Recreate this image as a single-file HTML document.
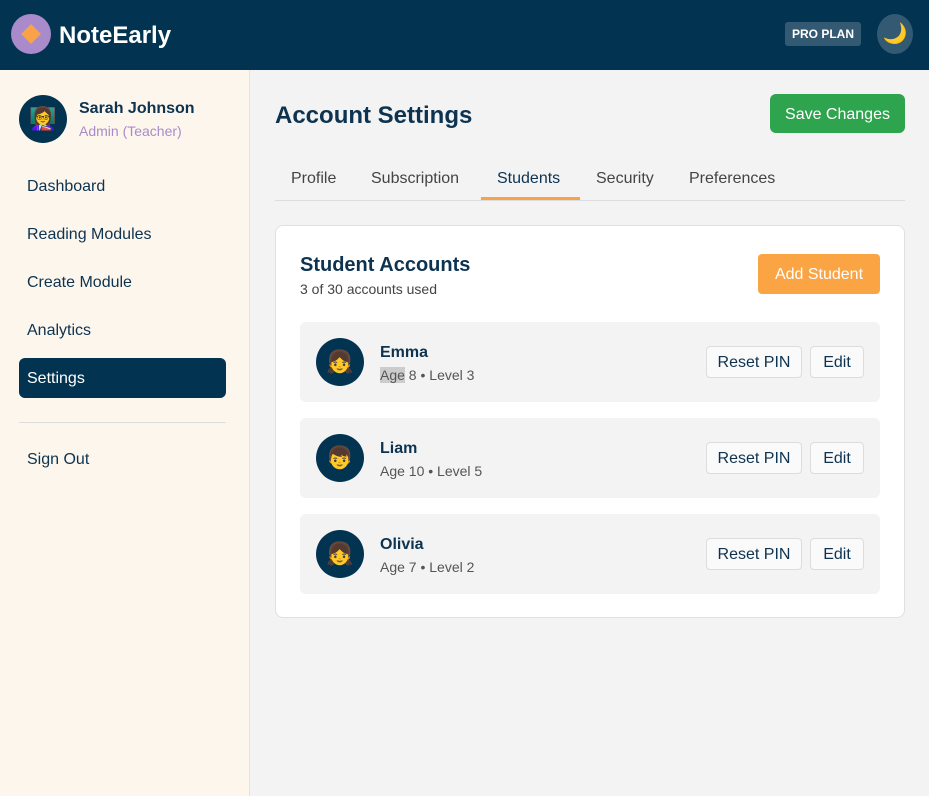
<!DOCTYPE html><html><head><style>
*{box-sizing:border-box;margin:0;padding:0}
body{width:929px;height:796px;overflow:hidden;font-family:"Liberation Sans",sans-serif;background:#f3f3f3;position:relative;color:#0d3350}
.hdr{position:absolute;left:0;top:0;width:929px;height:70px;background:#023452}
.logo{position:absolute;left:11px;top:14px;width:40px;height:40px;border-radius:50%;background:#a98bcb}
.logo i{position:absolute;left:13px;top:13px;width:14px;height:14px;background:#f9a24a;transform:rotate(45deg)}
.brand{position:absolute;left:59px;top:22px;color:#fff;font-weight:bold;font-size:24px}
.pro{position:absolute;left:785px;top:22px;width:76px;height:24px;background:#345a73;border-radius:3px;color:#fff;font-size:12px;font-weight:bold;text-align:center;line-height:24px}
.moon{position:absolute;left:877px;top:14px;width:36px;height:40px;border-radius:50%;background:#345a73;text-align:center;line-height:40px;font-size:20px}
.side{position:absolute;left:0;top:70px;width:250px;height:726px;background:#fdf6ec;border-right:1px solid #e3e3e3}
.av{position:absolute;left:19px;top:95px;width:48px;height:48px;border-radius:50%;background:#023452;text-align:center;line-height:48px;font-size:22px}
.nm{position:absolute;left:79px;top:100px;font-weight:bold;font-size:16px}
.rl{position:absolute;left:79px;top:123px;font-size:14px;color:#a98bcb}
.nav{position:absolute;left:19px;width:207px;height:40px;line-height:42px;padding-left:8px;font-size:16px;border-radius:6px}
.act{background:#023452;color:#fff}
.div{position:absolute;left:19px;top:422px;width:207px;height:1px;background:#ddd}
h1{position:absolute;left:275px;top:102px;font-size:24px}
.save{position:absolute;left:770px;top:94px;width:135px;height:39px;background:#2ea44f;color:#fff;border-radius:6px;font-size:16px;text-align:center;line-height:41px}
.tabs{position:absolute;left:275px;top:160px;width:630px;height:41px;border-bottom:1px solid #ddd}
.tab{position:absolute;top:10px;font-size:16px;color:#444}
.ul{position:absolute;left:206px;top:37px;width:99px;height:3px;background:#f9a24a}
.card{position:absolute;left:275px;top:225px;width:630px;height:393px;background:#fff;border:1px solid #e0e0e0;border-radius:8px}
.ct{position:absolute;left:300px;top:254px;font-size:20px;font-weight:bold}
.cs{position:absolute;left:300px;top:281px;font-size:14px;color:#444}
.add{position:absolute;left:758px;top:254px;width:122px;height:40px;background:#fba444;color:#fff;border-radius:4px;text-align:center;line-height:41px;font-size:16px}
.row{position:absolute;left:300px;width:580px;height:80px;background:#f3f3f3;border-radius:6px}
.ra{position:absolute;left:16px;top:16px;width:48px;height:48px;border-radius:50%;background:#023452;text-align:center;line-height:48px;font-size:22px}
.rn{position:absolute;left:80px;top:22px;font-weight:bold;font-size:16px}
.rs{position:absolute;left:80px;top:45px;font-size:14px;color:#555}
.b{position:absolute;top:24px;height:32px;background:#fafafa;border:1px solid #ddd;border-radius:4px;text-align:center;line-height:31px;font-size:16px}
.hl{background:#ccc}
</style></head><body>
<div class="hdr"><div class="logo"><i></i></div><div class="brand">NoteEarly</div><div class="pro">PRO PLAN</div><div class="moon">🌙</div></div>
<div class="side"></div>
<div class="av">👩‍🏫</div><div class="nm">Sarah Johnson</div><div class="rl">Admin (Teacher)</div>
<div class="nav" style="top:166px">Dashboard</div>
<div class="nav" style="top:214px">Reading Modules</div>
<div class="nav" style="top:262px">Create Module</div>
<div class="nav" style="top:310px">Analytics</div>
<div class="nav act" style="top:358px">Settings</div>
<div class="div"></div>
<div class="nav" style="top:439px">Sign Out</div>
<h1>Account Settings</h1><div class="save">Save Changes</div>
<div class="tabs"><span class="tab" style="left:16px">Profile</span><span class="tab" style="left:96px">Subscription</span><span class="tab" style="left:222px;color:#0d3350">Students</span><span class="tab" style="left:321px">Security</span><span class="tab" style="left:414px">Preferences</span><div class="ul"></div></div>
<div class="card"></div>
<div class="ct">Student Accounts</div><div class="cs">3 of 30 accounts used</div><div class="add">Add Student</div>
<div class="row" style="top:322px"><div class="ra">👧</div><div class="rn">Emma</div><div class="rs"><span class="hl">Age</span> 8 • Level 3</div><div class="b" style="left:406px;width:96px">Reset PIN</div><div class="b" style="left:510px;width:54px">Edit</div></div>
<div class="row" style="top:418px"><div class="ra">👦</div><div class="rn">Liam</div><div class="rs">Age 10 • Level 5</div><div class="b" style="left:406px;width:96px">Reset PIN</div><div class="b" style="left:510px;width:54px">Edit</div></div>
<div class="row" style="top:514px"><div class="ra">👧</div><div class="rn">Olivia</div><div class="rs">Age 7 • Level 2</div><div class="b" style="left:406px;width:96px">Reset PIN</div><div class="b" style="left:510px;width:54px">Edit</div></div>
</body></html>
